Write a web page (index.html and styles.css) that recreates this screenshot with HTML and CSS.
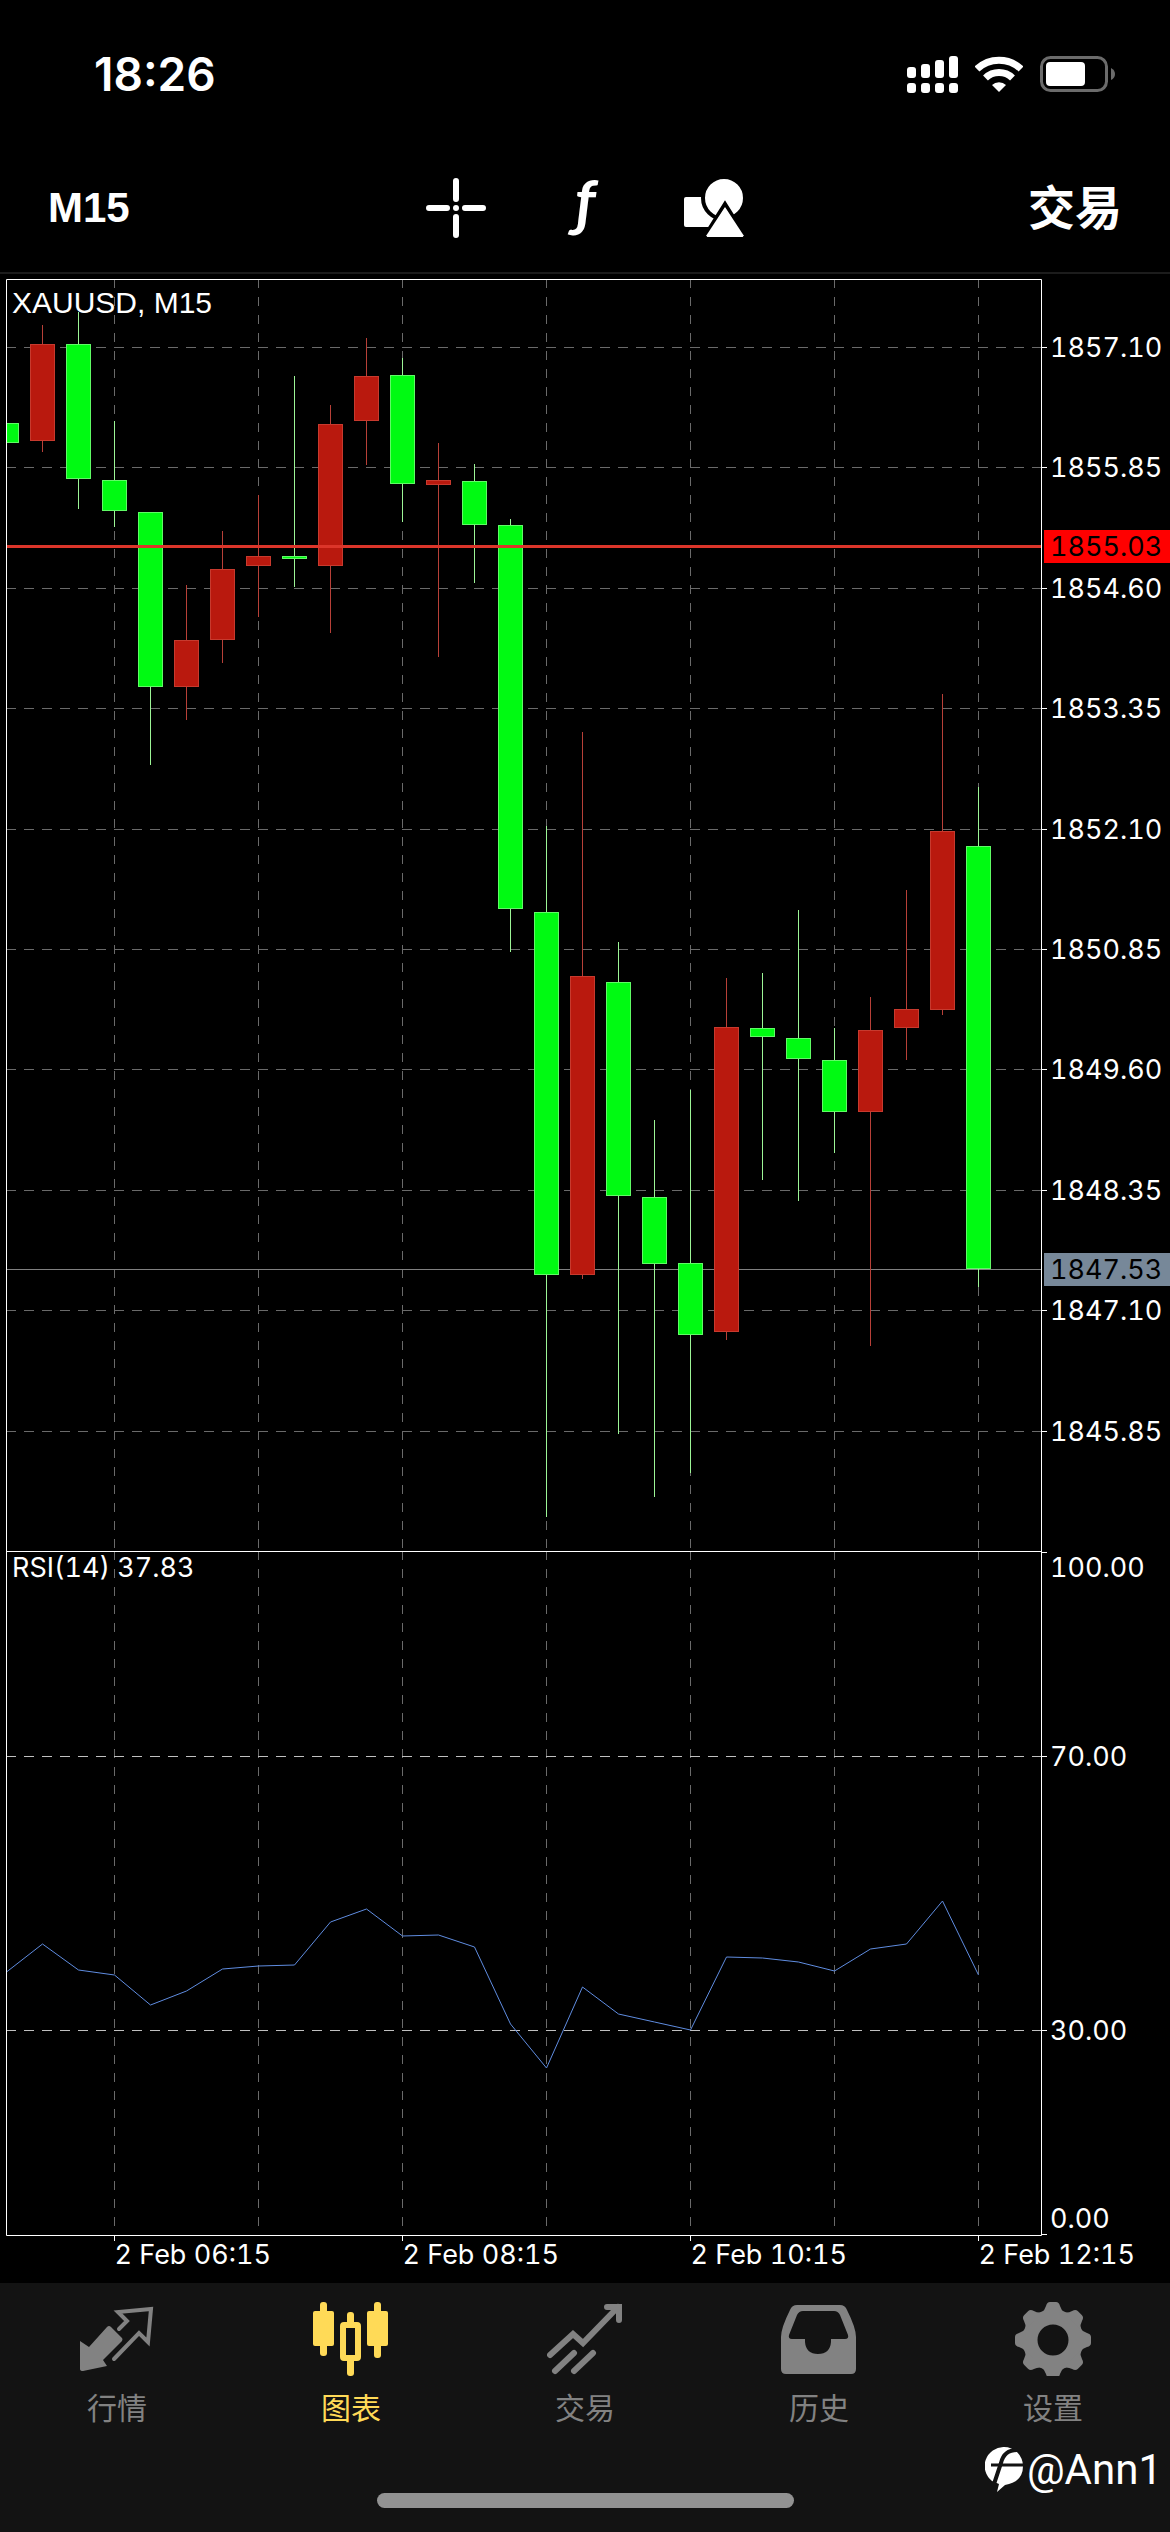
FILE: index.html
```html
<!DOCTYPE html>
<html lang="zh-CN">
    <head>
        <meta charset="utf-8">
        <meta name="viewport" content="width=device-width, initial-scale=1">
        <title>XAUUSD, M15</title>
        <link rel="stylesheet" href="styles.css">
    </head>
    <body>
        <header>
            <div class="status_bar">
                <span class="time">18:26</span>
                <div class="status_icons">
                    <svg width="51" height="37" viewBox="0 0 51 37" fill="#fff">
                        <rect x="0" y="11" width="9" height="11" rx="3"/>
                        <rect x="14" y="8" width="9" height="14" rx="3"/>
                        <rect x="28" y="4" width="9" height="18" rx="3"/>
                        <rect x="42" y="0" width="9" height="22" rx="3"/>
                        <rect x="0" y="27" width="9" height="10" rx="3"/>
                        <rect x="14" y="27" width="9" height="10" rx="3"/>
                        <rect x="28" y="27" width="9" height="10" rx="3"/>
                        <rect x="42" y="27" width="9" height="10" rx="3"/>
                    </svg>
                    <svg width="48" height="37" viewBox="0 0 48 37" fill="none" stroke="#fff" stroke-width="7">
                        <path d="M2 13A32 32 0 0 1 46 13"/>
                        <path d="M10.5 22A19.5 19.5 0 0 1 37.5 22"/>
                        <path d="M24 36L17 29A10 10 0 0 1 31 29Z" fill="#fff" stroke="none"/>
                    </svg>
                    <svg width="75" height="37" viewBox="0 0 75 37">
                        <rect x="1.5" y="1.5" width="65" height="33" rx="9" fill="none" stroke="#6b6b6b" stroke-width="3"/>
                        <rect x="6" y="6" width="39" height="24" rx="4" fill="#fff"/>
                        <path d="M71 12Q75 14 75 18T71 24Z" fill="#6b6b6b"/>
                    </svg>
                </div>
            </div>

            <div class="toolbar">
                <button class="timeframe">M15</button>
                <div class="tools">
                    <button aria-label="Crosshair">
                        <svg width="60" height="60" viewBox="0 0 60 60" stroke="#fff" stroke-width="6" stroke-linecap="round">
                            <path d="M3 30H21M39 30H57M30 3V21M30 39V57"/>
                            <circle cx="30" cy="30" r="3" fill="#fff" stroke="none"/>
                        </svg>
                    </button>
                    <button class="indicators" aria-label="Indicators">ƒ</button>
                    <button aria-label="Objects">
                        <svg width="60" height="60" viewBox="0 0 60 60" fill="#fff">
                            <rect x="0" y="19" width="34" height="30" rx="2"/>
                            <circle cx="40" cy="20" r="21" stroke="#000" stroke-width="4"/>
                            <path d="M41 26L63 61H19Z" stroke="#000" stroke-width="4"/>
                            <path d="M41 29L60 58H22Z"/>
                        </svg>
                    </button>
                </div>
                <button class="trade">交易</button>
            </div>
        </header>

        <main>
            <svg id="chart" viewBox="0 274 1170 2009">
                <g id="grid"></g>
                <path class="bid" d="M7 1269.5H1041"/>
                <g id="candles"></g>
                <path class="ask" d="M7 546.5H1041"/>
                <path class="level" d="M6 1756.5H1041M6 2030.5H1041"/>
                <polyline id="rsi"/>
                <path class="frame" d="M6.5 279.5H1041.5V2235.5H6.5ZM6.5 1551.5H1041.5"/>
                <text class="symbol" x="12" y="313">XAUUSD, M15</text>
                <text class="label" x="12" y="1577">RSI(14) 37.83</text>
                <g id="axis"></g>
                <rect class="ask_box" x="1044" y="530" width="126" height="33"/>
                <text class="label box_text" x="1050" y="556">1855.03</text>
                <rect class="bid_box" x="1044" y="1253" width="126" height="33"/>
                <text class="label box_text" x="1050" y="1279">1847.53</text>
            </svg>
        </main>

        <footer>
            <nav>
                <a href="#quotes">
                    <svg width="76" height="76" viewBox="0 0 76 76" fill="currentColor">
                        <path d="M1 41L10 47L28 27Q30 25 32 27L43 38Q44 39 43 41L24 60L28 66L4 71Q1 71 1 69Z"/>
                        <path d="M40 29L48 21L39 12L72 9L69 42L60 33L35 59" fill="none" stroke="currentColor" stroke-width="4" stroke-linecap="round"/>
                    </svg>
                    <span>行情</span>
                </a>
                <a href="#charts" class="active">
                    <svg width="76" height="76" viewBox="0 0 76 76" fill="currentColor">
                        <rect x="0" y="11" width="21" height="35" rx="2"/>
                        <rect x="7" y="2" width="7" height="54" rx="3"/>
                        <rect x="54" y="11" width="21" height="35" rx="2"/>
                        <rect x="61" y="2" width="7" height="56" rx="3"/>
                        <rect x="34" y="12" width="7" height="16" rx="3"/>
                        <rect x="34" y="56" width="7" height="20" rx="3"/>
                        <rect x="30" y="25" width="15" height="33" rx="1" fill="none" stroke="currentColor" stroke-width="6"/>
                    </svg>
                    <span>图表</span>
                </a>
                <a href="#trade">
                    <svg width="76" height="76" viewBox="0 0 76 76" fill="none" stroke="currentColor" stroke-width="6" stroke-linecap="round">
                        <path d="M3 55L26 34L36 43L71 7M60 7H72V20M8 71L27 53M27 71L46 53"/>
                    </svg>
                    <span>交易</span>
                </a>
                <a href="#history">
                    <svg width="76" height="76" viewBox="0 0 76 76" fill="currentColor" fill-rule="evenodd">
                        <path d="M16 5H59Q64 5 66 10Q75 28 75 37V69Q75 74 70 74H5Q0 74 0 69V37Q0 28 9 10Q11 5 16 5ZM22 11Q18 11 16 15L8 35Q7 39 11 39H24V42Q25 54 37 54T50 42V39H64Q68 39 67 35L59 15Q57 11 53 11Z"/>
                    </svg>
                    <span>历史</span>
                </a>
                <a href="#settings">
                    <svg width="76" height="76" viewBox="-38 -40 76 76" fill="currentColor">
                        <circle r="23" fill="none" stroke="currentColor" stroke-width="15"/>
                        <path id="tooth" d="M-12 -27Q-8 -30 -7 -34Q-6 -38 -3 -38H3Q6 -38 7 -34Q8 -30 12 -27Z"/>
                        <use href="#tooth" transform="rotate(45)"/>
                        <use href="#tooth" transform="rotate(90)"/>
                        <use href="#tooth" transform="rotate(135)"/>
                        <use href="#tooth" transform="rotate(180)"/>
                        <use href="#tooth" transform="rotate(225)"/>
                        <use href="#tooth" transform="rotate(270)"/>
                        <use href="#tooth" transform="rotate(315)"/>
                    </svg>
                    <span>设置</span>
                </a>
            </nav>
            <div class="home_bar"></div>
            <div class="watermark">
                <svg width="40" height="46" viewBox="0 0 40 46">
                    <path d="M19 0A19 19 0 0 1 38 19Q38 35 20 38L12 45L14 37L7 34A19 19 0 0 1 19 0Z" fill="#fff"/>
                    <path d="M32 3Q19 3 16 16L8 40" fill="none" stroke="#131313" stroke-width="4"/>
                    <path d="M6 18H39" stroke="#131313" stroke-width="3"/>
                </svg>
                <span>@Ann1</span>
            </div>
        </footer>

        <script src="chart.js"></script>
    </body>
</html>
```
FILE: styles.css
```css
body {
    margin: 0;
    min-height: 100vh;
    display: flex;
    flex-direction: column;
    background-color: #000;
    color: #fff;
    font-family: Inter, "Noto Sans CJK SC", sans-serif;
}
button {
    padding: 0;
    border: none;
    background: none;
    color: #fff;
}
svg {
    display: block;
}

/* status bar and toolbar */
header {
    border-bottom: 2px solid #1c1c1c;
}
.status_bar {
    display: flex;
    justify-content: space-between;
    align-items: center;
    height: 148px;
    padding: 0 55px 0 94px;
}
.time {
    font-size: 46px;
    font-weight: 600;
}
.status_icons {
    display: flex;
    gap: 17px;
}
.toolbar {
    display: grid;
    grid-template-columns: 1fr auto 1fr;
    align-items: center;
    height: 120px;
    padding: 0 48px 4px;
}
.timeframe {
    justify-self: start;
    font: bold 42px "Liberation Sans", sans-serif;
}
.tools {
    display: flex;
    align-items: center;
    gap: 69px;
}
.tools button {
    width: 60px;
    height: 60px;
}
.tools .indicators {
    padding-bottom: 16px;
    font: italic bold 62px/44px Lato, sans-serif;
}
.trade {
    justify-self: end;
    padding-bottom: 8px;
    font: bold 47px "Noto Sans CJK SC", sans-serif;
}

/* chart */
main {
    flex: 1;
}
#chart {
    width: 100%;
}
.frame, .tick {
    fill: none;
    stroke: #fff;
    stroke-width: 1;
}
.grid_x {
    stroke: #6a6a6a;
    stroke-dasharray: 10 8;
}
.grid_y {
    stroke: #6a6a6a;
    stroke-dasharray: 9 9;
}
.level {
    stroke: #c0c0c0;
    stroke-dasharray: 10 8;
}
.bid {
    stroke: #808080;
}
.ask {
    stroke: #dc352a;
    stroke-width: 3;
}
.up rect {
    fill: #b9190e;
    stroke: #c73a2e;
}
.up path {
    stroke: #b84038;
}
.down rect {
    fill: #00fa12;
    stroke: #60fa66;
}
.down path {
    stroke: #9cf596;
}
#rsi {
    fill: none;
    stroke: #5f8ce0;
}
.symbol {
    fill: #fff;
    font: 30px "Liberation Sans", sans-serif;
}
.label {
    fill: #fff;
    font: 27px Inter, sans-serif;
    font-variant-numeric: tabular-nums;
}
.ask_box {
    fill: #ff0000;
}
.bid_box {
    fill: #778899;
}
.box_text {
    fill: #000;
}

/* tab bar */
footer {
    position: relative;
    height: 249px;
    background-color: #131313;
}
nav {
    display: flex;
    padding-top: 17px;
}
nav a {
    flex: 1;
    display: flex;
    flex-direction: column;
    align-items: center;
    gap: 10px;
    color: #828282;
    font-size: 30px;
    line-height: 44px;
    text-decoration: none;
}
nav .active {
    color: #ffda57;
}
.home_bar {
    position: absolute;
    bottom: 24px;
    left: 50%;
    width: 417px;
    height: 15px;
    margin-left: -208px;
    border-radius: 8px;
    background-color: #929292;
}
.watermark {
    position: absolute;
    right: 8px;
    bottom: 39px;
    display: flex;
    align-items: center;
    gap: 2px;
    font: 42px/46px Roboto, sans-serif;
}
```
FILE: chart.js
```js
// one row per bar: direction, high, body top, body bottom, low
const candles = [
    ['down', 423, 423, 443, 443],
    ['up', 325, 344, 441, 452],
    ['down', 312, 344, 479, 509],
    ['down', 421, 480, 511, 527],
    ['down', 512, 512, 687, 765],
    ['up', 585, 640, 687, 720],
    ['up', 531, 569, 640, 663],
    ['up', 495, 556, 566, 617],
    ['down', 376, 556, 559, 587],
    ['up', 405, 424, 566, 633],
    ['up', 338, 376, 421, 465],
    ['down', 358, 375, 484, 522],
    ['up', 443, 480, 485, 657],
    ['down', 464, 481, 525, 583],
    ['down', 519, 525, 909, 952],
    ['down', 826, 912, 1275, 1517],
    ['up', 732, 976, 1275, 1279],
    ['down', 942, 982, 1196, 1434],
    ['down', 1120, 1197, 1264, 1497],
    ['down', 1090, 1263, 1335, 1473],
    ['up', 978, 1027, 1332, 1340],
    ['down', 973, 1028, 1037, 1180],
    ['down', 910, 1038, 1059, 1201],
    ['down', 1028, 1060, 1112, 1153],
    ['up', 997, 1030, 1112, 1346],
    ['up', 890, 1009, 1028, 1060],
    ['up', 694, 831, 1010, 1015],
    ['down', 787, 846, 1269, 1287]
];
const rsi = [
    1972, 1944, 1970, 1975, 2005, 1991, 1969, 1966, 1965, 1922, 1909, 1936, 1935, 1947,
    2024, 2068, 1987, 2014, 2022, 2030, 1957, 1958, 1962, 1971, 1949, 1944, 1901, 1975
];
const prices = ['1857.10', '1855.85', '1854.60', '1853.35', '1852.10', '1850.85', '1849.60', '1848.35', '1847.10', '1845.85'];
const times = ['2 Feb 06:15', '2 Feb 08:15', '2 Feb 10:15', '2 Feb 12:15'];

const barX = i => 6.5 + i * 36;

let grid = '';
let axis = '';

// price scale
prices.forEach(function(price, i) {
    const y = Math.round(347 + i * 120.4) + 0.5;
    grid += `<path class="grid_x" d="M6 ${y}H1041"/>`;
    axis += `<path class="tick" d="M1041 ${y}H1047"/><text class="label" x="1050" y="${y + 9}">${price}</text>`;
});

// RSI scale: value, tick, text baseline
[['100.00', 1552.5, 1577], ['70.00', 1756.5, 1766], ['30.00', 2030.5, 2040], ['0.00', 2234.5, 2228]].forEach(function(row) {
    axis += `<path class="tick" d="M1041 ${row[1]}H1047"/><text class="label" x="1050" y="${row[2]}">${row[0]}</text>`;
});

// a grid line every 4 bars, a time every 8
for (let i = 3; i < candles.length; i += 4) {
    grid += `<path class="grid_y" d="M${barX(i)} 279V1551M${barX(i)} 1551V2235"/>`;
}
times.forEach(function(time, i) {
    const x = barX(3 + i * 8);
    axis += `<path class="tick" d="M${x} 2235V2241"/><text class="label" x="${x}" y="2264">${time}</text>`;
});

document.getElementById('grid').innerHTML = grid;
document.getElementById('axis').innerHTML = axis;

document.getElementById('candles').innerHTML = candles.map(function([direction, high, top, bottom, low], i) {
    const x = barX(i);
    // the first bar is cut off by the left edge
    const left = i == 0 ? x : x - 12;
    return `<g class="${direction}">
        <path d="M${x} ${high}V${low}"/>
        <rect x="${left}" y="${top + 0.5}" width="${x + 12 - left}" height="${bottom - top - 1}"/>
    </g>`;
}).join('');

document.getElementById('rsi').setAttribute('points', rsi.map((y, i) => barX(i) + ',' + y).join(' '));
```
